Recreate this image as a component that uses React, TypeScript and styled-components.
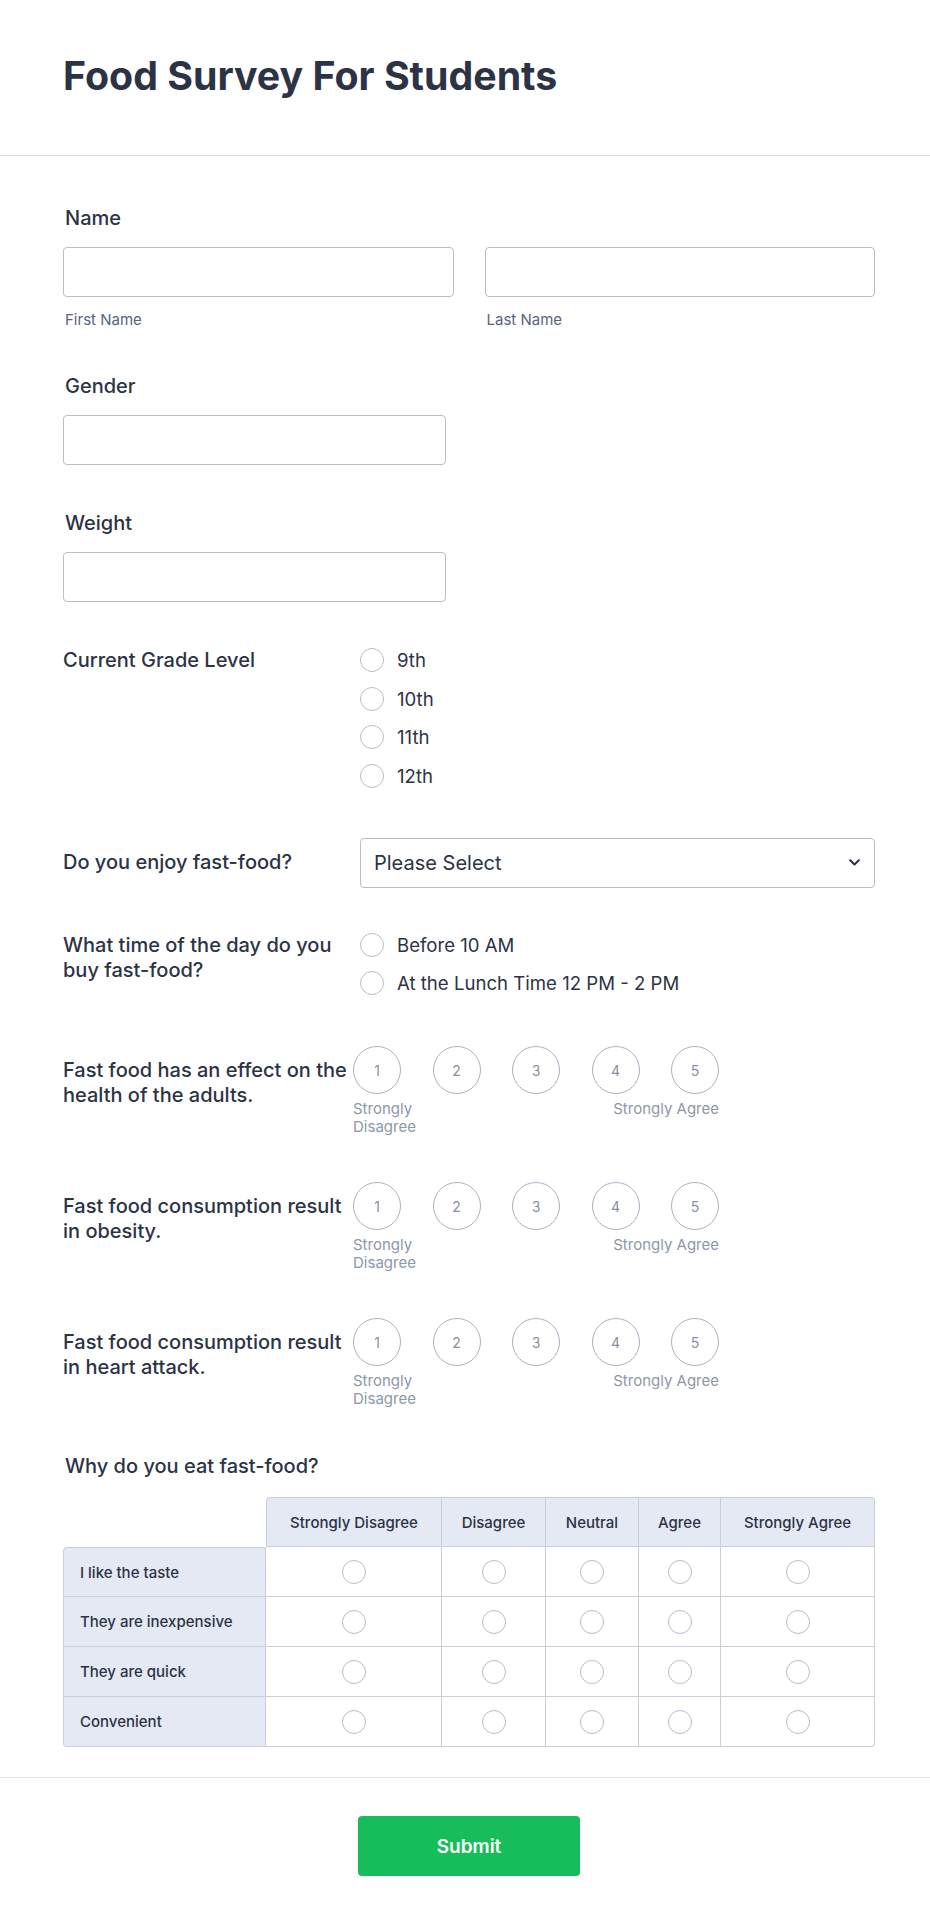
import React from "react";
import styled, { createGlobalStyle } from "styled-components";

const ink = "#2c3345";
const line = "#c8cedb";
const tint = "#e4e9f4";
const ring = "#b8bdc9";

const GlobalStyle = createGlobalStyle`
  body {
    margin: 0;
    background: #fff;
    font-family: Inter, "Noto Sans", "Liberation Sans", sans-serif;
    color: ${ink};
  }
  * { box-sizing: border-box; }
`;

const Header = styled.header`
  padding: 52px 55px 55px 63px;
  border-bottom: 1px solid #dcdfe6;
`;

const Title = styled.h1`
  margin: 0;
  font-size: 39.3px;
  line-height: 48px;
  font-weight: 700;
  color: ${ink};
`;

const Form = styled.form`
  display: flex;
  flex-direction: column;
  gap: 46px;
  padding: 50px 55px 30px 63px;
`;

const Stacked = styled.div<{ $shift?: number }>`
  display: flex;
  flex-direction: column;
  margin-top: ${(p) => p.$shift ?? 0}px;
`;

const Inline = styled.div<{ $shift?: number }>`
  display: grid;
  grid-template-columns: 290px 1fr;
  column-gap: 7px;
  align-items: start;
  margin-top: ${(p) => p.$shift ?? 0}px;
`;

const Label = styled.label<{ $top?: number }>`
  font-size: 20px;
  line-height: 25px;
  font-weight: 500;
  color: ${ink};
  padding-top: ${(p) => p.$top ?? 0}px;
`;

const StackedLabel = styled(Label)`
  margin-bottom: 16px;
  padding-left: 2px;
`;

const Pair = styled.div`
  display: grid;
  grid-template-columns: 1fr 1fr;
  column-gap: 31px;
`;

const Input = styled.input<{ $width?: number }>`
  width: ${(p) => (p.$width ? `${p.$width}px` : "100%")};
  height: 50px;
  border: 1px solid ${ring};
  border-radius: 4px;
  background: #fff;
  font: inherit;
  font-size: 18px;
  padding: 0 12px;
  outline: none;
`;

const Sub = styled.span`
  display: block;
  margin-top: 14px;
  padding-left: 2px;
  font-size: 15px;
  line-height: 18px;
  color: #57647e;
`;

const RadioList = styled.div`
  display: flex;
  flex-direction: column;
  gap: 14.5px;
`;

const RadioRow = styled.label`
  display: flex;
  align-items: center;
  gap: 13px;
  font-size: 18.6px;
  line-height: 24px;
  color: ${ink};
`;

const Dot = styled.span`
  flex: none;
  width: 24px;
  height: 24px;
  border-radius: 50%;
  border: 1px solid ${ring};
  background: #fff;
`;

const SelectBox = styled.div`
  position: relative;
  height: 50px;
  border: 1px solid ${ring};
  border-radius: 4px;
  display: flex;
  align-items: center;
  justify-content: space-between;
  padding: 0 14px 0 13px;
  font-size: 20px;
  color: ${ink};
`;

const Scale = styled.div`
  margin-left: -7px;
  width: 366px;
`;

const Circles = styled.div`
  display: flex;
  justify-content: space-between;
`;

const Circle = styled.span`
  width: 48px;
  height: 48px;
  border-radius: 50%;
  border: 1px solid #aab2c2;
  display: flex;
  align-items: center;
  justify-content: center;
  font-size: 14px;
  color: #8790a3;
`;

const Captions = styled.div`
  display: flex;
  justify-content: space-between;
  margin-top: 6px;
  font-size: 15px;
  line-height: 18px;
  color: #8d97ab;
`;

const Caption = styled.span<{ $right?: boolean }>`
  max-width: ${(p) => (p.$right ? "none" : "70px")};
  text-align: ${(p) => (p.$right ? "right" : "left")};
`;

const Matrix = styled.table`
  width: 100%;
  table-layout: fixed;
  border-collapse: separate;
  border-spacing: 0;
  margin-top: 18px;
  font-size: 15px;
  color: ${ink};
`;

const Blank = styled.th`
  border: none;
  background: transparent;
`;

const HeadCell = styled.th<{ $first?: boolean; $last?: boolean }>`
  height: 50px;
  font-weight: 500;
  background: ${tint};
  border-top: 1px solid ${line};
  border-right: 1px solid ${line};
  border-bottom: 1px solid ${line};
  border-left: ${(p) => (p.$first ? `1px solid ${line}` : "none")};
  border-top-left-radius: ${(p) => (p.$first ? "4px" : "0")};
  border-top-right-radius: ${(p) => (p.$last ? "4px" : "0")};
`;

const RowHead = styled.th<{ $first?: boolean; $last?: boolean }>`
  height: 50px;
  text-align: left;
  padding-left: 16px;
  font-weight: 500;
  background: ${tint};
  border-left: 1px solid ${line};
  border-right: 1px solid ${line};
  border-bottom: 1px solid ${line};
  border-top: ${(p) => (p.$first ? `1px solid ${line}` : "none")};
  border-top-left-radius: ${(p) => (p.$first ? "4px" : "0")};
  border-bottom-left-radius: ${(p) => (p.$last ? "4px" : "0")};
`;

const Cell = styled.td<{ $corner?: boolean }>`
  height: 50px;
  text-align: center;
  vertical-align: middle;
  border-right: 1px solid ${line};
  border-bottom: 1px solid ${line};
  border-bottom-right-radius: ${(p) => (p.$corner ? "4px" : "0")};
`;

const CellDot = styled(Dot)`
  display: inline-block;
  vertical-align: middle;
`;

const Footer = styled.footer`
  border-top: 1px solid #dfe2e9;
  padding: 38px 55px 49px 63px;
  display: flex;
  justify-content: center;
`;

const Submit = styled.button`
  width: 222px;
  height: 60px;
  border: none;
  border-radius: 4px;
  background: #18bd5b;
  color: #fff;
  font-family: inherit;
  font-size: 19px;
  font-weight: 600;
`;

const grades = ["9th", "10th", "11th", "12th"];
const times = ["Before 10 AM", "At the Lunch Time 12 PM - 2 PM"];
const statements = [
  "Fast food has an effect on the health of the adults.",
  "Fast food consumption result in obesity.",
  "Fast food consumption result in heart attack.",
];
const columns = [
  { name: "Strongly Disagree", width: 176 },
  { name: "Disagree", width: 104 },
  { name: "Neutral", width: 93 },
  { name: "Agree", width: 82 },
  { name: "Strongly Agree", width: 154 },
];
const reasons = ["I like the taste", "They are inexpensive", "They are quick", "Convenient"];

const RatingScale = () => (
  <Scale>
    <Circles>
      {[1, 2, 3, 4, 5].map((n) => (
        <Circle key={n}>{n}</Circle>
      ))}
    </Circles>
    <Captions>
      <Caption>Strongly Disagree</Caption>
      <Caption $right>Strongly Agree</Caption>
    </Captions>
  </Scale>
);

export default function App() {
  return (
    <>
      <GlobalStyle />
      <Header>
        <Title>Food Survey For Students</Title>
      </Header>
      <Form onSubmit={(e) => e.preventDefault()}>
        <Stacked>
          <StackedLabel>Name</StackedLabel>
          <Pair>
            <div>
              <Input />
              <Sub>First Name</Sub>
            </div>
            <div>
              <Input />
              <Sub>Last Name</Sub>
            </div>
          </Pair>
        </Stacked>

        <Stacked $shift={-1}>
          <StackedLabel>Gender</StackedLabel>
          <Input $width={383} />
        </Stacked>

        <Stacked>
          <StackedLabel>Weight</StackedLabel>
          <Input $width={383} />
        </Stacked>

        <Inline>
          <Label>Current Grade Level</Label>
          <RadioList>
            {grades.map((g) => (
              <RadioRow key={g}>
                <Dot />
                {g}
              </RadioRow>
            ))}
          </RadioList>
        </Inline>

        <Inline $shift={4}>
          <Label $top={12}>Do you enjoy fast-food?</Label>
          <SelectBox>
            <span>Please Select</span>
            <svg width="11" height="7" viewBox="0 0 11 7" fill="none">
              <path d="M1.2 1.2l4.3 4.3 4.3-4.3" stroke={ink} strokeWidth="2" strokeLinecap="round" strokeLinejoin="round" />
            </svg>
          </SelectBox>
        </Inline>

        <Inline $shift={-1}>
          <Label>What time of the day do you buy fast-food?</Label>
          <RadioList>
            {times.map((t) => (
              <RadioRow key={t}>
                <Dot />
                {t}
              </RadioRow>
            ))}
          </RadioList>
        </Inline>

        {statements.map((s, i) => (
          <Inline key={s} $shift={i === 0 ? 5 : 0}>
            <Label $top={12}>{s}</Label>
            <RatingScale />
          </Inline>
        ))}

        <Stacked>
          <Label style={{ paddingLeft: 2 }}>Why do you eat fast-food?</Label>
          <Matrix>
            <colgroup>
              <col style={{ width: 203 }} />
              {columns.map((c) => (
                <col key={c.name} style={{ width: c.width }} />
              ))}
            </colgroup>
            <thead>
              <tr>
                <Blank />
                {columns.map((c, i) => (
                  <HeadCell key={c.name} $first={i === 0} $last={i === columns.length - 1}>
                    {c.name}
                  </HeadCell>
                ))}
              </tr>
            </thead>
            <tbody>
              {reasons.map((r, ri) => (
                <tr key={r}>
                  <RowHead $first={ri === 0} $last={ri === reasons.length - 1}>
                    {r}
                  </RowHead>
                  {columns.map((c, ci) => (
                    <Cell
                      key={c.name}
                      $corner={ri === reasons.length - 1 && ci === columns.length - 1}
                    >
                      <CellDot />
                    </Cell>
                  ))}
                </tr>
              ))}
            </tbody>
          </Matrix>
        </Stacked>
      </Form>
      <Footer>
        <Submit type="submit">Submit</Submit>
      </Footer>
    </>
  );
}
